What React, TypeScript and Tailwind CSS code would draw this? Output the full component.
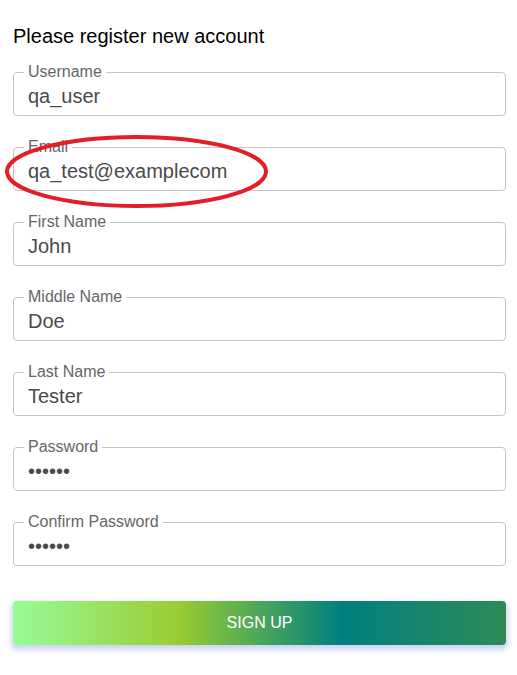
import React from "react";

const fields = [
  { label: "Username", value: "qa_user", type: "text" },
  { label: "Email", value: "qa_test@examplecom", type: "text" },
  { label: "First Name", value: "John", type: "text" },
  { label: "Middle Name", value: "Doe", type: "text" },
  { label: "Last Name", value: "Tester", type: "text" },
  { label: "Password", value: "123456", type: "password" },
  { label: "Confirm Password", value: "123456", type: "password" },
];

const Field = ({ label, value, type }: { label: string; value: string; type: string }) => (
  <fieldset className="m-0 rounded-[4px] border border-[#c4c4c4] px-[10px] pb-0 pt-0">
    <legend className="px-[4px] text-[16px] leading-[18px] text-[#666]">{label}</legend>
    <input
      type={type}
      defaultValue={value}
      readOnly
      className="block h-[34px] w-full bg-transparent px-[4px] pb-[7px] pt-[4px] text-[20px] leading-[23px] text-[#4a4a4a] outline-none"
    />
  </fieldset>
);

const App = () => {
  return (
    <div className="relative min-h-[675px] bg-white font-['Liberation_Sans',Arial,sans-serif]">
      <div className="flex w-[493px] flex-col pt-[25px] ml-[13px]">
        <h1 className="mb-[15px] text-[20px] leading-[23px] text-black">Please register new account</h1>
        <div className="flex flex-col gap-[22px]">
          {fields.map((f) => (
            <Field key={f.label} {...f} />
          ))}
        </div>
        <button className="mt-[35px] h-[44px] w-full rounded-[4px] bg-[linear-gradient(to_right,#98fb98,#9acd32,#008080,#2e8b57)] text-[16px] uppercase text-white shadow-[0_3px_5px_2px_rgba(90,120,230,0.3)]">
          Sign Up
        </button>
      </div>

      {/* annotation around the email field */}
      <svg className="pointer-events-none absolute left-0 top-0" width="517" height="675">
        <ellipse cx="136.5" cy="171.5" rx="129.5" ry="34.5" fill="none" stroke="#e41e26" strokeWidth="4" />
      </svg>
    </div>
  );
};

export default App;
